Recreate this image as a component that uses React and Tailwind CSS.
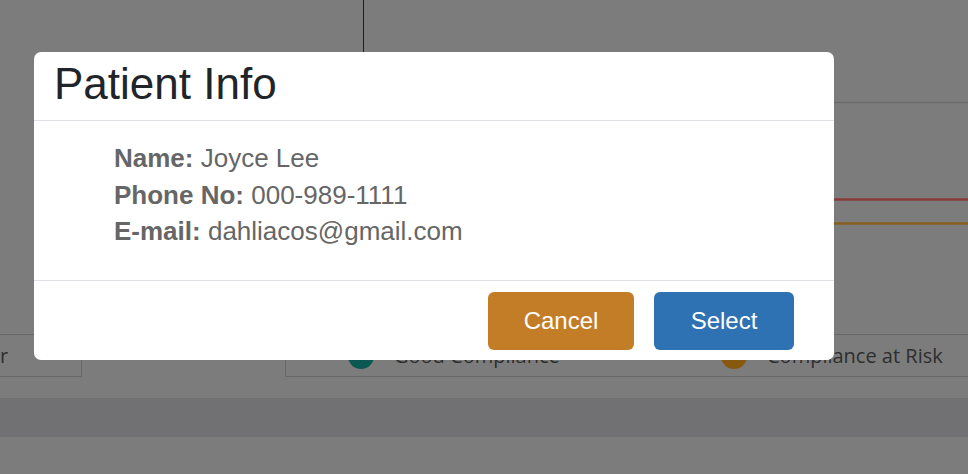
import React from "react";

const PATIENT = [
    { label: "Name:", value: "Joyce Lee" },
    { label: "Phone No:", value: "000-989-1111" },
    { label: "E-mail:", value: "dahliacos@gmail.com" },
];

function ChartBackdrop() {
    // dimmed chart lines behind the modal backdrop
    return (
        <svg width="968" height="334" className="block">
            <line x1="363.5" y1="0" x2="363.5" y2="60" stroke="#1f1f1f" strokeWidth="1" />
            <line x1="300" y1="102.5" x2="968" y2="102.5" stroke="#6c6c6c" strokeWidth="1.5" />
            <line x1="300" y1="199.5" x2="968" y2="199.5" stroke="#8b3a3a" strokeWidth="2.5" />
            <line x1="300" y1="223.5" x2="968" y2="223.5" stroke="#875f1d" strokeWidth="2.5" />
        </svg>
    );
}

function Legend() {
    return (
        <div className="flex h-[43px] text-[20px] text-[#2e2e2e]" style={{ fontFamily: '"Open Sans", sans-serif' }}>
            <div className="w-[82px] shrink-0 flex items-center border-y border-r border-[#686868]">
                <span className="leading-none">r</span>
            </div>
            <div className="ml-[203px] flex-1 flex items-center border-y border-l border-[#686868]">
                <span className="ml-[62px] w-[26px] h-[26px] rounded-full bg-[#0b5853] shrink-0" />
                <span className="ml-[20px] w-[327px] shrink-0">Good Compliance</span>
                <span className="w-[26px] h-[26px] rounded-full bg-[#87590f] shrink-0" />
                <span className="ml-[20px]">Compliance at Risk</span>
            </div>
        </div>
    );
}

function PatientModal() {
    return (
        <div
            className="absolute left-[34px] top-[52px] w-[800px] bg-white rounded-[7px] overflow-hidden"
            style={{ fontFamily: '"Liberation Sans", Arial, sans-serif' }}
        >
            {/* Header */}
            <div className="h-[69px] border-b border-[#dee2e6] px-5 pt-[6px]">
                <h2 className="text-[44px] leading-[1.2] text-[#212529]">Patient Info</h2>
            </div>

            {/* Body */}
            <div className="pl-[80px] pt-[19px] pb-[30px] text-[26px] leading-[36.5px] text-[#666666]">
                {PATIENT.map((row) => (
                    <div key={row.label}>
                        <span className="font-bold">{row.label}</span> {row.value}
                    </div>
                ))}
            </div>

            {/* Footer */}
            <div className="border-t border-[#dee2e6] flex justify-end gap-5 pr-10 pt-[11px] pb-[10px]">
                <button className="w-[146px] h-[58px] rounded-[6px] bg-[#c47d27] text-white text-[24px]">
                    Cancel
                </button>
                <button className="w-[140px] h-[58px] rounded-[6px] bg-[#2e72b3] text-white text-[24px]">
                    Select
                </button>
            </div>
        </div>
    );
}

export default function App() {
    return (
        <div className="relative w-full h-[474px] overflow-hidden bg-[#7c7c7c]">
            <ChartBackdrop />
            <Legend />
            <div className="mt-[21px] h-[39px] bg-[#717173]" />
            <PatientModal />
        </div>
    );
}
